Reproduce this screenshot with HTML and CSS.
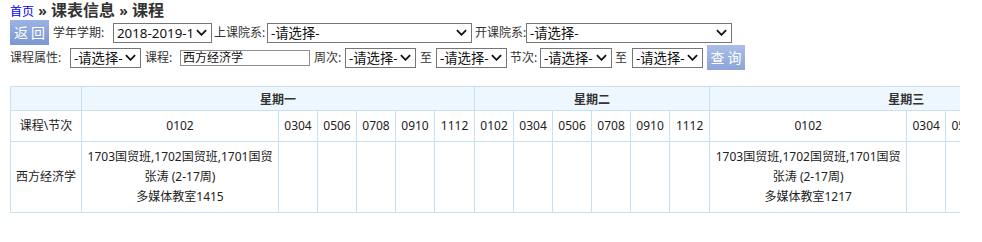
FILE: index.html
```html
<!DOCTYPE html>
<html lang="zh-CN">
<head>
<meta charset="utf-8">
<title>课表信息 - 课程</title>
<link rel="stylesheet" href="styles.css">
</head>
<body>
<div class="page">
  <div class="crumb"><a class="home" href="#">首页</a> <span class="sep">»</span> <span class="cur">课表信息</span> <span class="sep">»</span> <span class="cur">课程</span></div>

  <div class="toolbar">
    <button class="btn btn-back" type="button">返 回</button>
    <span class="lbl w-l1">学年学期:</span>
    <span class="sel w99"><span class="val">2018-2019-1</span><svg class="chev" viewBox="0 0 12 7"><polyline points="1,1 6,6 11,1"/></svg></span>
    <span class="lbl w-l2">上课院系:</span>
    <span class="sel w205"><span class="val">-请选择-</span><svg class="chev" viewBox="0 0 12 7"><polyline points="1,1 6,6 11,1"/></svg></span>
    <span class="lbl w-l3">开课院系:</span>
    <span class="sel w206"><span class="val">-请选择-</span><svg class="chev" viewBox="0 0 12 7"><polyline points="1,1 6,6 11,1"/></svg></span>
  </div>

  <div class="toolbar">
    <span class="lbl w-a">课程属性:</span>
    <span class="sel w71"><span class="val">-请选择-</span><svg class="chev" viewBox="0 0 12 7"><polyline points="1,1 6,6 11,1"/></svg></span>
    <span class="lbl w-b">课程:</span>
    <span class="inp">西方经济学</span>
    <span class="lbl w-c">周次:</span>
    <span class="sel w71"><span class="val">-请选择-</span><svg class="chev" viewBox="0 0 12 7"><polyline points="1,1 6,6 11,1"/></svg></span>
    <span class="lbl w-d">至</span>
    <span class="sel w71"><span class="val">-请选择-</span><svg class="chev" viewBox="0 0 12 7"><polyline points="1,1 6,6 11,1"/></svg></span>
    <span class="lbl w-e">节次:</span>
    <span class="sel w72"><span class="val">-请选择-</span><svg class="chev" viewBox="0 0 12 7"><polyline points="1,1 6,6 11,1"/></svg></span>
    <span class="lbl w-f">至</span>
    <span class="sel w71"><span class="val">-请选择-</span><svg class="chev" viewBox="0 0 12 7"><polyline points="1,1 6,6 11,1"/></svg></span>
    <button class="btn btn-query" type="button">查 询</button>
  </div>

  <div class="grid-wrap">
    <table class="sched">
      <colgroup>
        <col class="c-name">
        <col class="c-wide"><col class="c-n"><col class="c-n"><col class="c-n"><col class="c-n"><col class="c-n2">
        <col class="c-n"><col class="c-n"><col class="c-n"><col class="c-n"><col class="c-n"><col class="c-n2">
        <col class="c-wide"><col class="c-n"><col class="c-n"><col class="c-n"><col class="c-n"><col class="c-n2">
      </colgroup>
      <thead>
        <tr class="days">
          <th></th>
          <th colspan="6">星期一</th>
          <th colspan="6">星期二</th>
          <th colspan="6">星期三</th>
        </tr>
        <tr class="slots">
          <td>课程\节次</td>
          <td>0102</td><td>0304</td><td>0506</td><td>0708</td><td>0910</td><td>1112</td>
          <td>0102</td><td>0304</td><td>0506</td><td>0708</td><td>0910</td><td>1112</td>
          <td>0102</td><td>0304</td><td>0506</td>
        </tr>
      </thead>
      <tbody>
        <tr>
          <td>西方经济学</td>
          <td>1703国贸班,1702国贸班,1701国贸<br>张涛 (2-17周)<br>多媒体教室1415</td>
          <td></td><td></td><td></td><td></td><td></td>
          <td></td><td></td><td></td><td></td><td></td><td></td>
          <td>1703国贸班,1702国贸班,1701国贸<br>张涛 (2-17周)<br>多媒体教室1217</td>
          <td></td><td></td>
        </tr>
      </tbody>
    </table>
  </div>
</div>
</body>
</html>
```

FILE: styles.css
```css
* { box-sizing: border-box; }

body {
  margin: 0;
  background: #fff;
  color: #333;
  font-family: "Noto Sans", "Noto Sans CJK SC", sans-serif;
  font-size: 12px;
}

.page { padding: 0 10px; }

.crumb {
  height: 20px;
  line-height: 20px;
  font-size: 16px;
  font-weight: bold;
  color: #333;
  white-space: nowrap;
}
.crumb .home {
  font-size: 12px;
  font-weight: normal;
  color: #0000ee;
  text-decoration: none;
}
.crumb .sep { font-size: 14px; }

.toolbar {
  display: flex;
  align-items: center;
  height: 25px;
  white-space: nowrap;
}

.lbl {
  display: inline-block;
  font-size: 12px;
  color: #333;
  line-height: 20px;
  flex: none;
}
.w-l1 { width: 60px; margin-left: 4px; }
.w-l2 { width: 55px; padding-left: 2px; }
.w-l3 { width: 54px; padding-left: 3px; }
.w-a { width: 60px; }
.w-b { width: 39px; padding-left: 4px; }
.w-c { width: 35px; padding-left: 4px; }
.w-d { width: 20px; padding-left: 4px; }
.w-e { width: 33px; padding-left: 3px; }
.w-f { width: 20px; padding-left: 3px; }

.sel {
  display: inline-flex;
  align-items: center;
  justify-content: space-between;
  height: 20px;
  border: 1px solid #767676;
  background: #fff;
  padding: 0 4px 0 3px;
  font-size: 13.33px;
  color: #111;
  flex: none;
}
.sel .val { line-height: 18px; }
.w99 { width: 99px; }
.w205 { width: 205px; }
.w206 { width: 206px; }
.w71 { width: 71px; }
.w72 { width: 72px; }

.chev {
  width: 11px;
  height: 7px;
  flex: none;
}
.chev polyline {
  fill: none;
  stroke: #111;
  stroke-width: 2;
}

.inp {
  display: inline-block;
  width: 130px;
  height: 16px;
  line-height: 14px;
  border: 1px solid #8f8f8f;
  padding: 0 2px;
  font-size: 12px;
  color: #111;
  flex: none;
}

.btn {
  flex: none;
  height: 25px;
  border: none;
  padding: 0;
  color: #fff;
  font-family: "Noto Sans CJK SC", sans-serif;
  font-size: 14px;
  line-height: 25px;
  cursor: pointer;
}
.btn-back {
  width: 39px;
  background: linear-gradient(#9bb3e3, #7b97d1);
}
.btn-query {
  width: 38px;
  margin-left: 4px;
  background: linear-gradient(#a9bde6, #8ca5d9);
}

.grid-wrap {
  margin-top: 16px;
  width: 950px;
  overflow: hidden;
}

.sched {
  border-collapse: collapse;
  table-layout: fixed;
  width: 1093px;
  font-size: 12px;
  color: #222;
}
.sched col.c-name { width: 71px; }
.sched col.c-wide { width: 197px; }
.sched col.c-n { width: 39px; }
.sched col.c-n2 { width: 40px; }

.sched th,
.sched td {
  border: 1px solid #c6e0f4;
  text-align: center;
  vertical-align: middle;
  line-height: 20px;
  padding: 5px 0;
  white-space: nowrap;
  overflow: hidden;
}
.sched .days th {
  background: #eef7fe;
  font-weight: bold;
  color: #333;
  padding: 3px 0 0;
  height: 24px;
  line-height: 20px;
}
```
